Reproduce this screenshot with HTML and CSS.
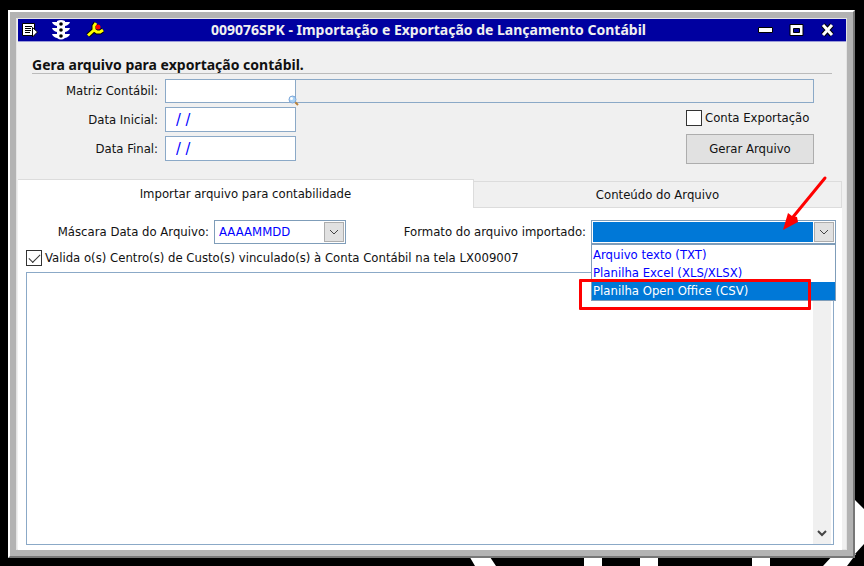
FILE: index.html
```
<!DOCTYPE html>
<html lang="pt-BR">

<head>
  <meta charset="UTF-8">
  <meta name="viewport" content="width=device-width, initial-scale=1.0">
  <title>009076SPK - Importação e Exportação de Lançamento Contábil</title>
  <link rel="stylesheet" href="styles.css">
</head>

<body>

  <svg class="backdrop" width="400" height="66" viewBox="0 0 400 66" aria-hidden="true">
    <path fill="#fff" d="M4 54h20l8 12H11zM120 54h18v12h-18zM176 54h18v12h-18zM288 54h18v12h-18zM370 54h22l-9 12h-24zM391 0l9 9v35l-9 10z" />
  </svg>

  <div class="window">

    <header class="titlebar">
      <div class="tools">
        <button type="button" class="icon-btn" aria-label="Menu">
          <svg width="16" height="16" viewBox="0 0 16 16">
            <path fill="#fff" stroke="#000" d="M.5 1.500h12v12H.5z" />
            <path stroke="#000" d="M3 4.500h7M3 6.500h6M3 8.500h6M3 10.500h5" />
            <path fill="#fff" stroke="#000" d="M10.500 5.500l5 4.500-5 5z" />
          </svg>
        </button>
        <button type="button" class="icon-btn" aria-label="Semáforo">
          <svg width="18" height="20" viewBox="0 0 18 20">
            <path fill="#fff" d="M5 1q4-2 8 0v1h5q-1 3-5 4v2h5q-1 3-5 4v2h5q-1 3-5 4-4 3-8 0-4-1-5-4h5v-2q-4-1-5-4h5V6Q1 5 0 2h5z" />
            <circle cx="9" cy="4" r="1.800" fill="#000" />
            <circle cx="9" cy="10" r="1.800" fill="#000" />
            <circle cx="9" cy="16" r="1.800" fill="#000" />
          </svg>
        </button>
        <button type="button" class="icon-btn" aria-label="Ferramentas">
          <svg width="20" height="18" viewBox="-2 0 20 18">
            <path stroke="#000" stroke-width="5" d="M2 14.500L8 9M10 2L8 5v4l3 2h3l3-2" />
            <path stroke="#ff0" stroke-width="3" d="M2 14.500L8 9M10 2L8 5v4l3 2h3l3-2" />
            <circle cx="12" cy="6" r="2.500" fill="#f00" />
          </svg>
        </button>
      </div>
      <h1>009076SPK - Importação e Exportação de Lançamento Contábil</h1>
      <div class="controls">
        <button type="button" class="icon-btn" aria-label="Minimizar">
          <svg width="15" height="14" viewBox="0 0 15 14">
            <path fill="#fff" stroke="#000" d="M.5 4.500h14v5H.5z" />
          </svg>
        </button>
        <button type="button" class="icon-btn" aria-label="Maximizar">
          <svg width="15" height="14" viewBox="0 0 15 14">
            <path fill="#fff" fill-rule="evenodd" stroke="#000" d="M1 1.500h13v11H1zM4.500 5.500h6v4h-6z" />
          </svg>
        </button>
        <button type="button" class="icon-btn" aria-label="Fechar">
          <svg width="15" height="14" viewBox="0 0 15 14">
            <path stroke="#000" stroke-width="5" d="M3 2l9 10M12 2L3 12" />
            <path stroke="#fff" stroke-width="3" d="M3 2l9 10M12 2L3 12" />
          </svg>
        </button>
      </div>
    </header>

    <section class="export">
      <h2>Gera arquivo para exportação contábil.</h2>
      <div class="export-body">
        <label for="matriz">Matriz Contábil:</label>
        <div class="lookup">
          <input type="text" id="matriz" class="field">
          <input type="text" class="field description" aria-label="Descrição da matriz" readonly>
          <svg class="lens" width="12" height="12" viewBox="0 0 12 12" aria-hidden="true">
            <path stroke="#b7813a" stroke-width="2" d="M7 7l3 3" />
            <circle cx="4.500" cy="4.500" r="3.500" fill="#a9d2f5" stroke="#7da7d9" />
            <circle cx="3.500" cy="3.500" r="1.500" fill="#fff" />
          </svg>
        </div>

        <label for="inicial">Data Inicial:</label>
        <div class="line">
          <input type="text" id="inicial" class="field date" value="/ /">
          <div class="actions check">
            <input type="checkbox" id="conta">
            <label for="conta">Conta Exportação</label>
          </div>
        </div>

        <label for="final">Data Final:</label>
        <div class="line">
          <input type="text" id="final" class="field date" value="/ /">
          <div class="actions">
            <button type="button" class="push">Gerar Arquivo</button>
          </div>
        </div>
      </div>
    </section>

    <nav class="tabs" role="tablist">
      <button type="button" class="tab active" role="tab" aria-selected="true">Importar arquivo para contabilidade</button>
      <button type="button" class="tab" role="tab" aria-selected="false">Conteúdo do Arquivo</button>
    </nav>

    <section class="panel" role="tabpanel">
      <div class="filters">
        <label for="mascara" class="mask-label">Máscara Data do Arquivo:</label>
        <div class="combo mask">
          <select id="mascara">
            <option>AAAAMMDD</option>
          </select>
          <span class="drop"><svg width="12" height="8" viewBox="0 0 12 8"><path d="M2 2l4 4 4-4" /></svg></span>
        </div>
        <label for="formato" class="format-label">Formato do arquivo importado:</label>
        <div class="combo format">
          <select id="formato" class="focused">
            <option></option>
          </select>
          <span class="drop"><svg width="12" height="8" viewBox="0 0 12 8"><path d="M2 2l4 4 4-4" /></svg></span>
          <ul class="options" role="listbox">
            <li role="option">Arquivo texto (TXT)</li>
            <li role="option">Planilha Excel (XLS/XLSX)</li>
            <li role="option" class="selected" aria-selected="true">Planilha Open Office (CSV)</li>
          </ul>
          <div class="highlight"></div>
          <svg class="pointer" width="46" height="58" viewBox="0 0 46 58" aria-hidden="true">
            <path stroke="#f00" stroke-width="3" stroke-linecap="round" d="M43 4L11 43" />
            <path fill="#f00" d="M1 56l5-17 4 3 5 1 1 5z" />
          </svg>
        </div>
      </div>

      <div class="check">
        <input type="checkbox" id="valida" checked>
        <label for="valida">Valida o(s) Centro(s) de Custo(s) vinculado(s) à Conta Contábil na tela LX009007</label>
      </div>

      <div class="log">
        <textarea aria-label="Conteúdo importado"></textarea>
        <div class="scrollbar">
          <svg width="12" height="8" viewBox="0 0 12 8"><path d="M2 1l4 4 4-4" /></svg>
        </div>
      </div>
    </section>

  </div>

</body>

</html>
```
FILE: styles.css
```
* {
  box-sizing: border-box;
}

body {
  margin: 0;
  min-height: 100vh;
  padding: 10px 9px 8px 8px;
  display: flex;
  background-color: #000;
  color: #111;
  font-family: "DejaVu Sans Condensed", "DejaVu Sans", sans-serif;
  font-size: 13px;
  line-height: 16px;
}

h1,
h2 {
  font-family: "Noto Sans", sans-serif;
  font-size: 14px;
  font-weight: bold;
}

button,
input,
select,
textarea {
  font: inherit;
  color: inherit;
}

svg {
  display: block;
  fill: none;
}

.backdrop {
  position: absolute;
  right: 0;
  bottom: 0;
}

/* janela */
.window {
  position: relative;
  flex: 1;
  min-width: 0;
  display: flex;
  flex-direction: column;
  background-color: #f0f0f0;
  border: 2px solid #fff;
  border-right-color: #777;
  border-bottom-color: #777;
  box-shadow: inset 0 0 0 6px #b3b3b3, inset 0 0 0 7px #e4e4e4;
  padding: 7px 7px 6px 8px;
}

.titlebar {
  display: grid;
  grid-template-columns: 1fr auto 1fr;
  align-items: center;
  height: 23px;
  padding: 0 11px 0 4px;
  background-color: #0000a0;
  border-bottom: 1px solid #9a9ad8;
}

.titlebar h1 {
  margin: 0;
  color: #f0f0f0;
  white-space: nowrap;
}

.tools,
.controls {
  display: flex;
  align-items: center;
  gap: 14px;
}

.controls {
  justify-content: flex-end;
  gap: 16px;
}

.icon-btn {
  padding: 0;
  border: none;
  background: none;
}

/* exportação */
.export {
  padding: 14px 14px 18px;
}

.export h2 {
  margin: 0 0 5px;
  border-bottom: 1px solid #bbb;
  line-height: 17px;
}

.export-body {
  display: grid;
  grid-template-columns: 126px 1fr;
  column-gap: 7px;
  row-gap: 4px;
  align-items: center;
  padding-right: 18px;
}

.export-body > label {
  text-align: right;
}

.lookup,
.line {
  position: relative;
  display: flex;
  align-items: center;
}

.field {
  width: 131px;
  height: 25px;
  padding: 0 10px;
  background-color: #fff;
  border: 1px solid #8ba9c7;
  color: #00f;
}

.lookup .field {
  height: 24px;
}

.date {
  font-size: 16px;
}

.field.description {
  flex: 1;
  background-color: #f0f0f0;
  border-left: none;
}

.lens {
  position: absolute;
  left: 123px;
  bottom: -4px;
}

.actions {
  width: 128px;
  margin-left: auto;
}

.actions.check {
  padding-bottom: 4px;
}

.push {
  width: 100%;
  height: 30px;
  margin: -3px 0;
  background-color: #e1e1e1;
  border: 1px solid #adadad;
}

.check {
  display: flex;
  align-items: center;
  gap: 3px;
  white-space: nowrap;
}

.check input {
  flex: none;
  display: grid;
  place-items: center;
  width: 16px;
  height: 16px;
  margin: 0;
  appearance: none;
  background-color: #fff;
  border: 1px solid #333;
}

.check input:checked::before {
  content: "";
  width: 10px;
  height: 5px;
  margin-bottom: 3px;
  border: solid #333;
  border-width: 0 0 1px 1px;
  transform: rotate(-45deg);
}

/* abas */
.tabs {
  display: flex;
  align-items: flex-end;
  margin-right: 4px;
}

.tab {
  flex: 368;
  height: 27px;
  padding: 0;
  background-color: #f0f0f0;
  border: 1px solid #dcdcdc;
  border-left: none;
}

.tab.active {
  flex: 456;
  height: 29px;
  background-color: #fff;
  border-bottom: none;
}

.panel {
  flex: 1;
  display: flex;
  flex-direction: column;
  gap: 6px;
  margin-right: 4px;
  padding: 12px 8px 5px;
  background-color: #fff;
}

.filters {
  display: flex;
  align-items: center;
  margin-right: -2px;
  white-space: nowrap;
}

.mask-label {
  width: 183px;
  text-align: right;
}

.format-label {
  margin-left: auto;
}

.combo {
  position: relative;
  display: flex;
  height: 24px;
  margin-left: 5px;
  padding: 1px;
  background-color: #fff;
  border: 1px solid #7f9db9;
}

.combo select {
  flex: 1;
  min-width: 0;
  padding: 0 3px;
  appearance: none;
  background-color: #fff;
  border: none;
  border-radius: 0;
  color: #00f;
}

.combo select.focused {
  background-color: #0078d7;
}

.mask {
  width: 132px;
}

.format {
  width: 245px;
}

.drop {
  display: grid;
  place-items: center;
  width: 20px;
  margin-left: 1px;
  background-color: #e1e1e1;
  border: 1px solid #adadad;
  pointer-events: none;
}

.drop path,
.scrollbar path {
  stroke: #444;
  stroke-width: 2;
}

.drop path {
  stroke-width: 1;
}

.options {
  position: absolute;
  z-index: 1;
  top: 23px;
  left: -1px;
  right: -1px;
  margin: 0;
  padding: 1px 0 0;
  list-style: none;
  background-color: #fff;
  border: 1px solid #7f9db9;
  color: #00f;
}

.options li {
  padding: 1px;
  line-height: 16px;
}

.options .selected {
  background-color: #0078d7;
  color: #fff;
}

/* marcações sobre a lista */
.highlight {
  position: absolute;
  z-index: 2;
  top: 58px;
  left: -13px;
  width: 232px;
  height: 31px;
  border: 3px solid #f00;
  border-radius: 1px;
}

.pointer {
  position: absolute;
  z-index: 2;
  right: 7px;
  bottom: 11px;
}

.log {
  flex: 1;
  display: flex;
  padding-right: 2px;
  border: 1px solid #8ba9c7;
}

.log textarea {
  flex: 1;
  min-width: 0;
  padding: 4px;
  border: none;
  resize: none;
}

.scrollbar {
  display: flex;
  align-items: flex-end;
  justify-content: center;
  width: 18px;
  padding-bottom: 6px;
  background-color: #f0f0f0;
}
```
